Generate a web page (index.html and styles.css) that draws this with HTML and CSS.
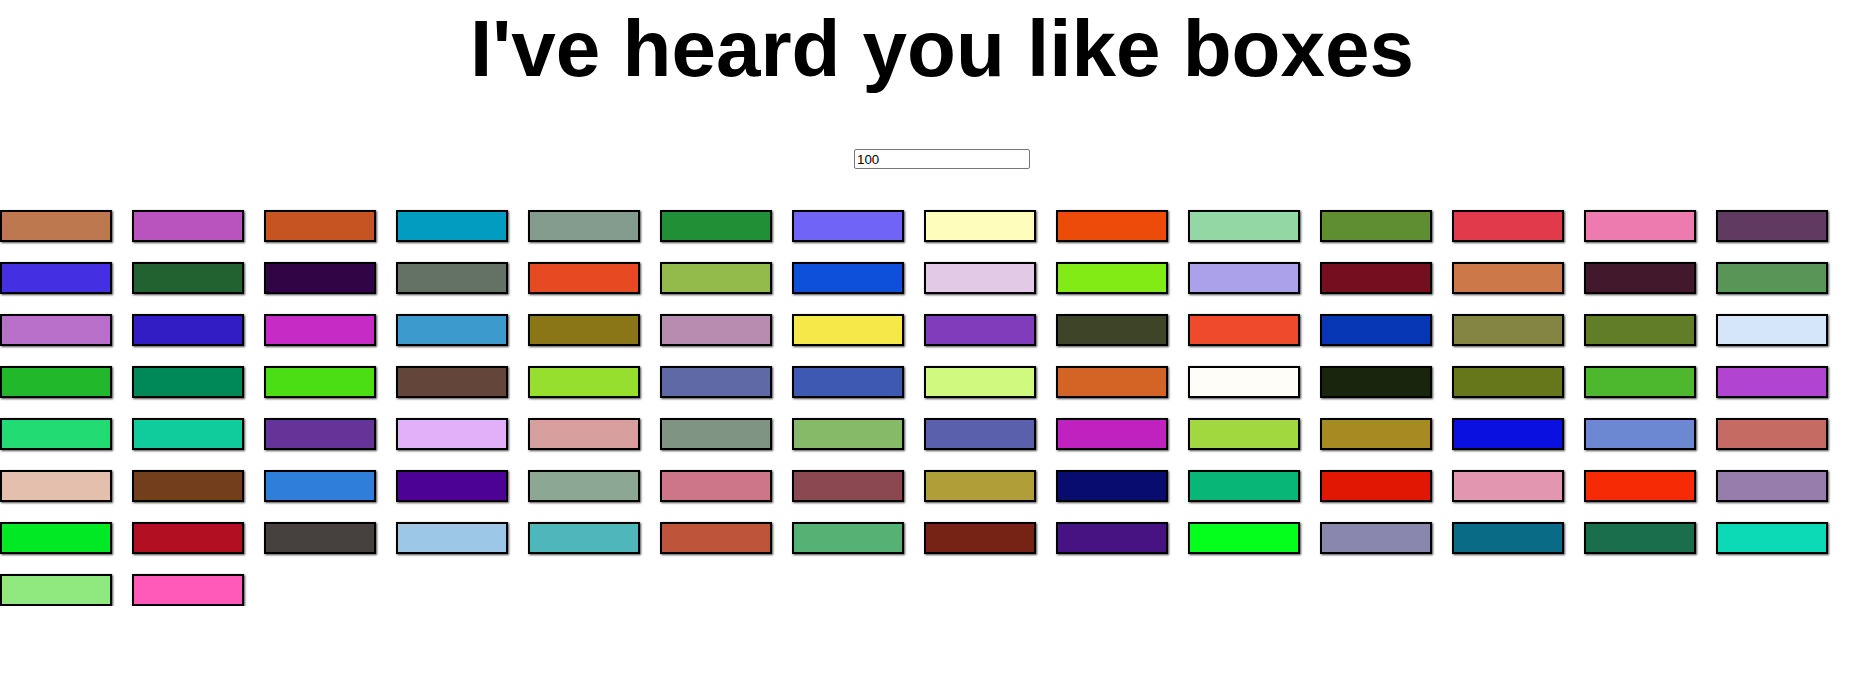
FILE: index.html
```html
<!DOCTYPE html>
<html>
<head>
<meta charset="utf-8">
<title>Boxes</title>
<link rel="stylesheet" href="styles.css">
</head>
<body>
<h1 class="title">I've heard you like boxes</h1>
<div class="controls"><input class="count" type="text" value="100"></div>
<div class="grid">
<div class="box" style="background:#BE7850"></div>
<div class="box" style="background:#B954BF"></div>
<div class="box" style="background:#C65423"></div>
<div class="box" style="background:#039CC1"></div>
<div class="box" style="background:#839C8E"></div>
<div class="box" style="background:#208F36"></div>
<div class="box" style="background:#6F64F5"></div>
<div class="box" style="background:#FFFDBB"></div>
<div class="box" style="background:#EC4B0A"></div>
<div class="box" style="background:#93D7A4"></div>
<div class="box" style="background:#5F8D31"></div>
<div class="box" style="background:#E13A4A"></div>
<div class="box" style="background:#ED7BAF"></div>
<div class="box" style="background:#613A62"></div>
<div class="box" style="background:#452FE2"></div>
<div class="box" style="background:#226231"></div>
<div class="box" style="background:#300445"></div>
<div class="box" style="background:#647266"></div>
<div class="box" style="background:#E74A23"></div>
<div class="box" style="background:#93BB4B"></div>
<div class="box" style="background:#0F50DB"></div>
<div class="box" style="background:#E2CAE6"></div>
<div class="box" style="background:#82EA15"></div>
<div class="box" style="background:#ABA0EA"></div>
<div class="box" style="background:#750E1F"></div>
<div class="box" style="background:#CD7848"></div>
<div class="box" style="background:#42182C"></div>
<div class="box" style="background:#589557"></div>
<div class="box" style="background:#B870CA"></div>
<div class="box" style="background:#321CC4"></div>
<div class="box" style="background:#C72BC5"></div>
<div class="box" style="background:#3C9BCC"></div>
<div class="box" style="background:#8A7617"></div>
<div class="box" style="background:#B88BB0"></div>
<div class="box" style="background:#F7E84A"></div>
<div class="box" style="background:#803CBA"></div>
<div class="box" style="background:#3E4427"></div>
<div class="box" style="background:#F04A2D"></div>
<div class="box" style="background:#0837B5"></div>
<div class="box" style="background:#848543"></div>
<div class="box" style="background:#617D28"></div>
<div class="box" style="background:#D5E5FA"></div>
<div class="box" style="background:#21B92B"></div>
<div class="box" style="background:#008958"></div>
<div class="box" style="background:#4BDE15"></div>
<div class="box" style="background:#634539"></div>
<div class="box" style="background:#97DF2F"></div>
<div class="box" style="background:#5E69A6"></div>
<div class="box" style="background:#3E59B1"></div>
<div class="box" style="background:#CFFA7F"></div>
<div class="box" style="background:#D46425"></div>
<div class="box" style="background:#FFFDF8"></div>
<div class="box" style="background:#19250C"></div>
<div class="box" style="background:#66761B"></div>
<div class="box" style="background:#4DB82E"></div>
<div class="box" style="background:#B145D2"></div>
<div class="box" style="background:#22DC73"></div>
<div class="box" style="background:#10CC9C"></div>
<div class="box" style="background:#663498"></div>
<div class="box" style="background:#E2AFF9"></div>
<div class="box" style="background:#D7A09F"></div>
<div class="box" style="background:#7F9483"></div>
<div class="box" style="background:#86BA68"></div>
<div class="box" style="background:#5A60AB"></div>
<div class="box" style="background:#C022BF"></div>
<div class="box" style="background:#A1D83F"></div>
<div class="box" style="background:#A88A22"></div>
<div class="box" style="background:#0910E0"></div>
<div class="box" style="background:#6C88D2"></div>
<div class="box" style="background:#C66B63"></div>
<div class="box" style="background:#E5BFAD"></div>
<div class="box" style="background:#733E1C"></div>
<div class="box" style="background:#2F7ED9"></div>
<div class="box" style="background:#4C0395"></div>
<div class="box" style="background:#8CA894"></div>
<div class="box" style="background:#CD7689"></div>
<div class="box" style="background:#8B4850"></div>
<div class="box" style="background:#B09F38"></div>
<div class="box" style="background:#080C6E"></div>
<div class="box" style="background:#08B678"></div>
<div class="box" style="background:#E11704"></div>
<div class="box" style="background:#E396AF"></div>
<div class="box" style="background:#F62B05"></div>
<div class="box" style="background:#977DAB"></div>
<div class="box" style="background:#00E924"></div>
<div class="box" style="background:#B30F22"></div>
<div class="box" style="background:#46403E"></div>
<div class="box" style="background:#9DC7E6"></div>
<div class="box" style="background:#4FB7BC"></div>
<div class="box" style="background:#BE5439"></div>
<div class="box" style="background:#56B175"></div>
<div class="box" style="background:#762215"></div>
<div class="box" style="background:#471282"></div>
<div class="box" style="background:#05FF1D"></div>
<div class="box" style="background:#8987AE"></div>
<div class="box" style="background:#0A6B86"></div>
<div class="box" style="background:#1A6E4B"></div>
<div class="box" style="background:#0CDAB6"></div>
<div class="box" style="background:#8FE97F"></div>
<div class="box" style="background:#FF5ABA"></div>
</div>
</body>
</html>
```

FILE: styles.css
```css
html, body {
  margin: 0;
  padding: 0;
  background: #fff;
}

body {
  font-family: "Liberation Sans", Arial, sans-serif;
  color: #000;
}

.title {
  margin: 3px 0 0;
  padding-left: 22px;
  font-size: 80px;
  font-weight: bold;
  text-align: center;
}

.controls {
  display: flex;
  justify-content: center;
  padding-left: 22px;
  margin-top: 54px;
}

.count {
  box-sizing: border-box;
  width: 176px;
  height: 20px;
  margin: 0;
  padding: 1px 2px;
  border: 1px solid #767676;
  border-radius: 2px;
  font-family: "Liberation Sans", Arial, sans-serif;
  font-size: 13.33px;
  color: #000;
  background: #fff;
}

.grid {
  display: flex;
  flex-wrap: wrap;
  gap: 20px;
  margin-top: 41px;
}

.box {
  width: 108px;
  height: 28px;
  border: 2px solid #000;
  box-shadow: 1px 1px 2px rgba(0, 0, 0, 0.7);
}
```
